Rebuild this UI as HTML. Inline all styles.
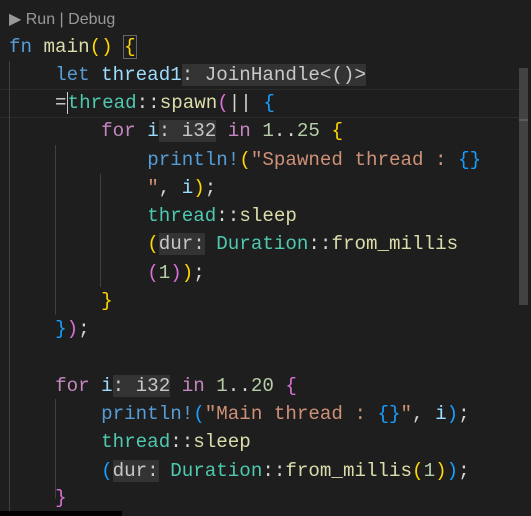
<!DOCTYPE html>
<html><head><meta charset="utf-8"><style>
body{margin:0;width:531px;height:516px;background:#1e1e1e;overflow:hidden;position:relative;font-family:"Liberation Mono",monospace;}
.l{position:absolute;left:9px;height:28px;line-height:28px;font-size:19.2px;white-space:pre;color:#d4d4d4;}
.kw{color:#569cd6}.fn{color:#dcdcaa}.y{color:#ffd700}.p{color:#da70d6}.b{color:#179fff}
.v{color:#9cdcfe}.t{color:#4ec9b0}.c{color:#c586c0}.n{color:#b5cea8}.s{color:#ce9178}
.h{background:#333333;color:#c8c8c8}
.g{position:absolute;width:1px;background:#404040}
</style></head><body>
<div style="position:absolute;left:0;right:12px;top:89px;height:27px;border-top:1px solid #2c2c2c;border-bottom:1px solid #2c2c2c"></div>
<div style="position:absolute;left:9px;top:9px;font:16px 'Liberation Sans',sans-serif;color:#999">&#9654; Run | Debug</div>
<div class="g" style="left:9px;top:61px;height:450px"></div>
<div class="g" style="left:55px;top:145px;height:170px"></div>
<div class="g" style="left:55px;top:399px;height:100px"></div>
<div class="g" style="left:100px;top:174px;height:113px"></div>
<div class="l" style="top:33px"><span class="kw">fn</span> <span class="fn">main</span><span class="y">()</span> <span class="y" style="outline:1px solid #666">{</span></div>
<div class="l" style="top:61px">    <span class="kw">let</span> <span class="v">thread1</span><span class="h">: JoinHandle&lt;()&gt;</span></div>
<div class="l" style="top:89px">    =<span class="t" style="border-left:1px solid #ccc">thread</span>::<span class="fn">spawn</span><span class="p">(</span>|| <span class="b">{</span></div>
<div class="l" style="top:117px">        <span class="c">for</span> <span class="v">i</span><span class="h">: i32</span> <span class="c">in</span> <span class="n">1</span>..<span class="n">25</span> <span class="y">{</span></div>
<div class="l" style="top:146px">            <span class="kw">println!</span><span class="y">(</span><span class="s">"Spawned thread : </span><span class="b">{}</span></div>
<div class="l" style="top:174px">            <span class="s">"</span>, <span class="v">i</span><span class="y">)</span>;</div>
<div class="l" style="top:202px">            <span class="t">thread</span>::<span class="fn">sleep</span></div>
<div class="l" style="top:230px">            <span class="y">(</span><span class="h">dur:</span> <span class="t">Duration</span>::<span class="fn">from_millis</span></div>
<div class="l" style="top:259px">            <span class="p">(</span><span class="n">1</span><span class="p">)</span><span class="y">)</span>;</div>
<div class="l" style="top:287px">        <span class="y">}</span></div>
<div class="l" style="top:315px">    <span class="b">}</span><span class="p">)</span>;</div>
<div class="l" style="top:372px">    <span class="c">for</span> <span class="v">i</span><span class="h">: i32</span> <span class="c">in</span> <span class="n">1</span>..<span class="n">20</span> <span class="p">{</span></div>
<div class="l" style="top:400px">        <span class="kw">println!</span><span class="b">(</span><span class="s">"Main thread : </span><span class="b">{}</span><span class="s">"</span>, <span class="v">i</span><span class="b">)</span>;</div>
<div class="l" style="top:428px">        <span class="t">thread</span>::<span class="fn">sleep</span></div>
<div class="l" style="top:457px">        <span class="b">(</span><span class="h">dur:</span> <span class="t">Duration</span>::<span class="fn">from_millis</span><span class="y">(</span><span class="n">1</span><span class="y">)</span><span class="b">)</span>;</div>
<div class="l" style="top:484px">    <span class="p">}</span></div>
<div style="position:absolute;left:519px;top:68px;width:9px;height:237px;background:#424242"></div>
<div style="position:absolute;left:519px;top:119px;width:9px;height:2px;background:#5a5a5a"></div>
<div style="position:absolute;left:0;top:511px;width:122px;height:5px;background:#000"></div>
</body></html>
